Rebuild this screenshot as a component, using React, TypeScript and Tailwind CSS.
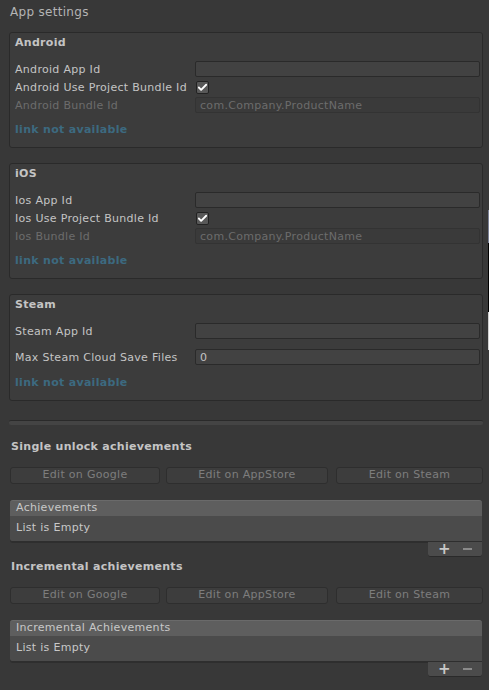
import { Check } from "lucide-react";

const FONT = { fontFamily: '"DejaVu Sans", Verdana, sans-serif', letterSpacing: "0.3px" };

function Field({ value = "", disabled = false }: { value?: string; disabled?: boolean }) {
  return (
    <div
      className={`flex-1 h-[16px] border rounded-[2px] px-[4px] flex items-center text-[11px] leading-none ${
        disabled
          ? "bg-[#3a3a3a] border-[#333333] text-[#6c6c6c]"
          : "bg-[#424242] border-[#2a2a2a] text-[#c4c4c4]"
      }`}
    >
      {value}
    </div>
  );
}

function Row({
  label,
  disabled = false,
  children,
}: {
  label: string;
  disabled?: boolean;
  children: React.ReactNode;
}) {
  return (
    <div className="flex items-center h-[16px]">
      <div
        className={`w-[180px] shrink-0 text-[11px] leading-none ${
          disabled ? "text-[#6c6c6c]" : "text-[#c4c4c4]"
        }`}
      >
        {label}
      </div>
      {children}
    </div>
  );
}

function Checkbox() {
  return (
    <div className="w-[13px] h-[13px] ml-[1px] rounded-[2px] bg-[#585858] border border-[#222222] flex items-center justify-center">
      <Check className="w-[11px] h-[11px] text-white" strokeWidth={4} />
    </div>
  );
}

function Link() {
  return <div className="text-[11px] font-bold text-[#3c6a80] leading-none h-[16px] flex items-center">link not available</div>;
}

function PlatformBox({
  title,
  prefix,
}: {
  title: string;
  prefix: string;
}) {
  return (
    <div className="h-[116px] bg-[#3c3c3c] border border-[#2a2a2a] rounded-[3px] pl-[5px] pr-[2px] pt-[1px]">
      <div className="h-[18px] flex items-center text-[11px] font-bold text-[#c4c4c4]">{title}</div>
      <div className="mt-[9px] flex flex-col gap-[2px]">
        <Row label={`${prefix} App Id`}>
          <Field />
        </Row>
        <Row label={`${prefix} Use Project Bundle Id`}>
          <Checkbox />
        </Row>
        <Row label={`${prefix} Bundle Id`} disabled>
          <Field value="com.Company.ProductName" disabled />
        </Row>
      </div>
      <div className="mt-[8px]">
        <Link />
      </div>
    </div>
  );
}

function Buttons() {
  return (
    <div className="flex h-[17px] text-[11px] text-[#7d7d7d]">
      <div className="w-[150px] ml-[1px] bg-[#3d3d3d] border border-[#2e2e2e] rounded-[3px] flex items-center justify-center">
        Edit on Google
      </div>
      <div className="w-[162px] ml-[6px] bg-[#3d3d3d] border border-[#2e2e2e] rounded-[3px] flex items-center justify-center">
        Edit on AppStore
      </div>
      <div className="w-[147px] ml-[8px] bg-[#3d3d3d] border border-[#2e2e2e] rounded-[3px] flex items-center justify-center">
        Edit on Steam
      </div>
    </div>
  );
}

function List({ title }: { title: string }) {
  return (
    <div className="ml-[1px] w-[472px]">
      <div className="h-[16px] bg-[#5e5e5e] rounded-t-[3px] border-t border-[#6a6a6a] px-[6px] flex items-center text-[11px] text-[#c8c8c8]">
        {title}
      </div>
      <div className="h-[26px] bg-[#4b4b4b] border-b border-[#2e2e2e] px-[6px] flex items-center text-[11px] text-[#c8c8c8] rounded-bl-[3px] shadow-[0_1px_0_#2e2e2e]">
        List is Empty
      </div>
      <div className="flex justify-end">
        <div className="w-[54px] h-[15px] bg-[#4b4b4b] rounded-b-[3px] border-b border-[#2a2a2a] flex items-center justify-around px-[4px] text-[#c8c8c8]">
          <span className="text-[15px] font-bold leading-none">+</span>
          <span className="block w-[9px] h-[2px] bg-[#8a8a8a]" />
        </div>
      </div>
    </div>
  );
}

export default function App() {
  return (
    <div className="w-[489px] h-[690px] bg-[#383838] overflow-hidden flex" style={FONT}>
      <div className="w-[488px] pl-[9px] pr-[5px]">
        <div className="h-[23px] flex items-center pl-[1px] text-[12px] text-[#b4b4b4]">App settings</div>

        <div className="mt-[9px]">
          <PlatformBox title="Android" prefix="Android" />
        </div>

        <div className="mt-[15px]">
          <PlatformBox title="iOS" prefix="Ios" />
        </div>

        <div className="mt-[15px] h-[107px] bg-[#3c3c3c] border border-[#2a2a2a] rounded-[3px] pl-[5px] pr-[2px] pt-[1px]">
          <div className="h-[18px] flex items-center text-[11px] font-bold text-[#c4c4c4]">Steam</div>
          <div className="mt-[9px] flex flex-col gap-[10px]">
            <Row label="Steam App Id">
              <Field />
            </Row>
            <Row label="Max Steam Cloud Save Files">
              <Field value="0" />
            </Row>
          </div>
          <div className="mt-[9px]">
            <Link />
          </div>
        </div>

        <div className="mt-[19px] h-[5px] rounded-[2px] bg-[#444444] border-t border-[#2a2a2a]" />

        <div className="mt-[13px] h-[18px] flex items-center pl-[2px] text-[11px] font-bold text-[#c4c4c4]">
          Single unlock achievements
        </div>
        <div className="mt-[11px]">
          <Buttons />
        </div>
        <div className="mt-[16px]">
          <List title="Achievements" />
        </div>

        <div className="mt-[1px] h-[18px] flex items-center pl-[2px] text-[11px] font-bold text-[#c4c4c4]">
          Incremental achievements
        </div>
        <div className="mt-[11px]">
          <Buttons />
        </div>
        <div className="mt-[16px]">
          <List title="Incremental Achievements" />
        </div>
      </div>
      <div className="w-[1px] flex flex-col">
        <div className="h-[210px] bg-[#383838]" />
        <div className="h-[33px] bg-[#7a8095]" />
        <div className="h-[69px] bg-black" />
        <div className="h-[38px] bg-[#d0d0d0]" />
      </div>
    </div>
  );
}
